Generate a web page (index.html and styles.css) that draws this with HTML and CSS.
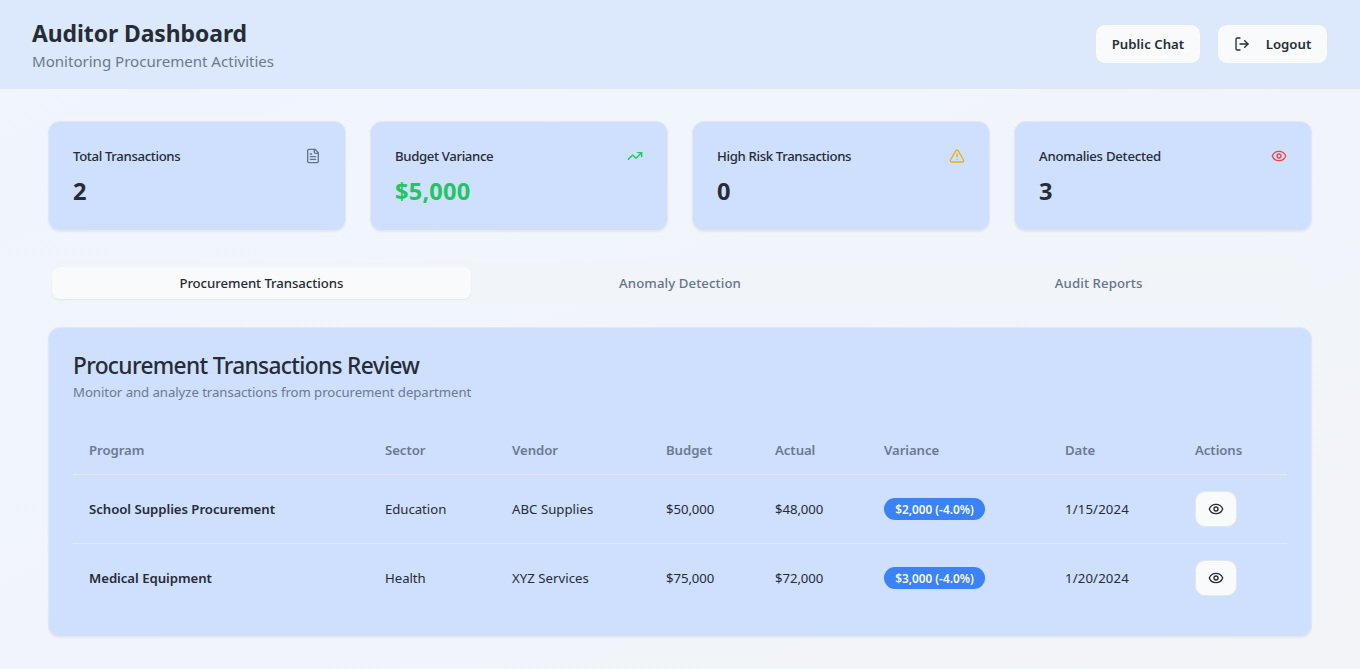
FILE: index.html
```html
<!DOCTYPE html>
<html lang="en">
<head>
<meta charset="utf-8">
<title>Auditor Dashboard</title>
<link rel="stylesheet" href="styles.css">
</head>
<body>
<svg width="0" height="0" class="sprite" aria-hidden="true">
  <symbol id="eye" viewBox="0 0 24 24"><path d="M2.062 12.348a1 1 0 0 1 0-.696 10.75 10.75 0 0 1 19.876 0 1 1 0 0 1 0 .696 10.75 10.75 0 0 1-19.876 0"/><circle cx="12" cy="12" r="3"/></symbol>
</svg>
<header class="header">
  <div>
    <h1 class="title">Auditor Dashboard</h1>
    <p class="subtitle">Monitoring Procurement Activities</p>
  </div>
  <div class="header-actions">
    <button class="btn">Public Chat</button>
    <button class="btn btn-logout">
      <svg class="icon" viewBox="0 0 24 24"><path d="M9 21H5a2 2 0 0 1-2-2V5a2 2 0 0 1 2-2h4"/><path d="m16 17 5-5-5-5"/><path d="M21 12H9"/></svg>
      <span>Logout</span>
    </button>
  </div>
</header>
<main class="main">
  <section class="stats">
    <div class="card stat">
      <div class="stat-head"><h3 class="stat-label">Total Transactions</h3>
        <svg class="icon muted" viewBox="0 0 24 24"><path d="M15 2H6a2 2 0 0 0-2 2v16a2 2 0 0 0 2 2h12a2 2 0 0 0 2-2V7Z"/><path d="M14 2v4a2 2 0 0 0 2 2h4"/><path d="M10 9H8"/><path d="M16 13H8"/><path d="M16 17H8"/></svg></div>
      <div class="stat-value">2</div>
    </div>
    <div class="card stat">
      <div class="stat-head"><h3 class="stat-label">Budget Variance</h3>
        <svg class="icon green" viewBox="0 0 24 24"><path d="m22 7-8.500 8.500-5-5L2 17"/><path d="M16 7h6v6"/></svg></div>
      <div class="stat-value green">$5,000</div>
    </div>
    <div class="card stat">
      <div class="stat-head"><h3 class="stat-label">High Risk Transactions</h3>
        <svg class="icon yellow" viewBox="0 0 24 24"><path d="m21.730 18-8-14a2 2 0 0 0-3.480 0l-8 14A2 2 0 0 0 4 21h16a2 2 0 0 0 1.730-3"/><path d="M12 9v4"/><path d="M12 17h.01"/></svg></div>
      <div class="stat-value">0</div>
    </div>
    <div class="card stat">
      <div class="stat-head"><h3 class="stat-label wide">Anomalies Detected</h3>
        <svg class="icon red"><use href="#eye"/></svg></div>
      <div class="stat-value">3</div>
    </div>
  </section>
  <nav class="tabs">
    <button class="tab active">Procurement Transactions</button>
    <button class="tab">Anomaly Detection</button>
    <button class="tab">Audit Reports</button>
  </nav>
  <section class="card review">
    <h2 class="review-title">Procurement Transactions Review</h2>
    <p class="review-desc">Monitor and analyze transactions from procurement department</p>
    <table class="table">
      <colgroup><col class="c-program"><col class="c-sector"><col class="c-vendor"><col class="c-amount"><col class="c-amount"><col class="c-variance"><col class="c-date"><col></colgroup>
      <thead>
        <tr><th>Program</th><th>Sector</th><th>Vendor</th><th>Budget</th><th>Actual</th><th>Variance</th><th>Date</th><th>Actions</th></tr>
      </thead>
      <tbody>
        <tr>
          <td class="program">School Supplies Procurement</td><td>Education</td><td class="vendor">ABC Supplies</td>
          <td class="amount">$50,000</td><td class="amount">$48,000</td><td><span class="badge">$2,000 (-4.0%)</span></td><td class="date">1/15/2024</td>
          <td><button class="view" aria-label="View"><svg class="icon"><use href="#eye"/></svg></button></td>
        </tr>
        <tr>
          <td class="program">Medical Equipment</td><td>Health</td><td class="vendor">XYZ Services</td>
          <td class="amount">$75,000</td><td class="amount">$72,000</td><td><span class="badge">$3,000 (-4.0%)</span></td><td class="date">1/20/2024</td>
          <td><button class="view" aria-label="View"><svg class="icon"><use href="#eye"/></svg></button></td>
        </tr>
      </tbody>
    </table>
  </section>
</main>
</body>
</html>
```

FILE: styles.css
```css
*, *::before, *::after { box-sizing: border-box; }

body {
  margin: 0;
  min-height: 669px;
  background: linear-gradient(to bottom right, #f0f5fe, #f2f4f8);
  color: #262c36;
  font: 13.2px/20px "Noto Sans", "Open Sans", sans-serif;
}
h1, h2, h3, p { margin: 0; }
button { font: inherit; color: inherit; }
.sprite { position: absolute; }

.icon {
  display: block;
  width: 16px;
  height: 16px;
  flex: none;
  fill: none;
  stroke: currentColor;
  stroke-width: 2;
  stroke-linecap: round;
  stroke-linejoin: round;
}
.muted { color: #64748b; }
.green { color: #22c55e; }
.yellow { color: #eab308; }
.red { color: #ef4444; }

.header {
  display: flex;
  justify-content: space-between;
  align-items: center;
  height: 89px;
  padding: 0 32px;
  background: #dce8fc;
  border-bottom: 1px solid #e2e8f0;
}
.title { font-size: 22.9px; line-height: 34px; font-weight: 700; letter-spacing: -0.06px; }
.subtitle { font-size: 15.1px; line-height: 20px; letter-spacing: -0.02px; color: #6b7a91; }
.header-actions { display: flex; gap: 16px; }
.btn {
  display: flex;
  align-items: center;
  justify-content: center;
  gap: 16px;
  width: 106px;
  height: 40px;
  padding: 0;
  background: #f9fafc;
  border: 1px solid #e2e8f0;
  border-radius: 10px;
  font-weight: 570;
  letter-spacing: 0.03px;
}
.btn-logout { width: 111px; }

.main { padding: 32px 48px; }
.card {
  background: #cfdffe;
  border: 1px solid #e2e8f0;
  border-radius: 12px;
  box-shadow: 0 1px 2px rgba(0, 0, 0, 0.06);
}
.stats { display: grid; grid-template-columns: repeat(4, 1fr); gap: 24px; }
.stat { height: 110px; padding: 24px; }
.stat-head { display: flex; align-items: center; justify-content: space-between; margin-bottom: 9px; }
.stat-label { font-size: 13.2px; line-height: 20px; font-weight: 500; letter-spacing: -0.36px; }
.stat-label.wide { letter-spacing: -0.26px; }
.stat-value { font-size: 23.6px; line-height: 32px; font-weight: 700; letter-spacing: 0.2px; }

.tabs {
  display: grid;
  grid-template-columns: repeat(3, 1fr);
  height: 40px;
  margin: 32px 0 24px;
  padding: 4px;
  border-radius: 10px;
  background: #f1f4f9;
}
.tab {
  padding: 0;
  border: 0;
  border-radius: 8px;
  background: none;
  color: #64748b;
  font-weight: 550;
  letter-spacing: 0.1px;
}
.tab.active {
  background: #f9fafc;
  color: #262c36;
  letter-spacing: -0.07px;
  box-shadow: 0 1px 2px rgba(0, 0, 0, 0.06);
}

.review { padding: 26px 24px 24px; height: 310px; }
.review-title { font-size: 22.7px; line-height: 24px; font-weight: 500; letter-spacing: -0.66px; }
.review-desc { margin: 4px 0 24px; letter-spacing: -0.06px; color: #6b7a91; }

.table { width: 1214px; table-layout: fixed; border-collapse: separate; border-spacing: 0; }
.c-program { width: 296px; }
.c-sector { width: 127px; }
.c-vendor { width: 154px; }
.c-amount { width: 109px; }
.c-variance { width: 181px; }
.c-date { width: 130px; }
th, td { padding: 0 16px; text-align: left; vertical-align: middle; white-space: nowrap; letter-spacing: -0.04px; }
th { height: 49px; font-weight: 560; letter-spacing: -0.07px; color: #6b7a91; border-bottom: 1px solid #e2e8f0; }
td { height: 69px; border-bottom: 1px solid #e2e8f0; }
tr:last-child td { height: 68px; border-bottom: 0; }
.program { font-weight: 580; letter-spacing: -0.04px; }
.vendor { letter-spacing: 0.03px; }
.amount { letter-spacing: -0.08px; }
.date { letter-spacing: 0.14px; }
.badge {
  display: inline-flex;
  align-items: center;
  justify-content: center;
  width: 101px;
  height: 22px;
  border-radius: 11px;
  background: #3b82f6;
  color: #f8fafc;
  font-size: 11.8px;
  font-weight: 600;
  letter-spacing: 0;
  vertical-align: middle;
}
.view {
  display: flex;
  align-items: center;
  justify-content: center;
  width: 42px;
  height: 36px;
  padding: 0;
  background: #f9fafc;
  border: 1px solid #e2e8f0;
  border-radius: 10px;
}
```
